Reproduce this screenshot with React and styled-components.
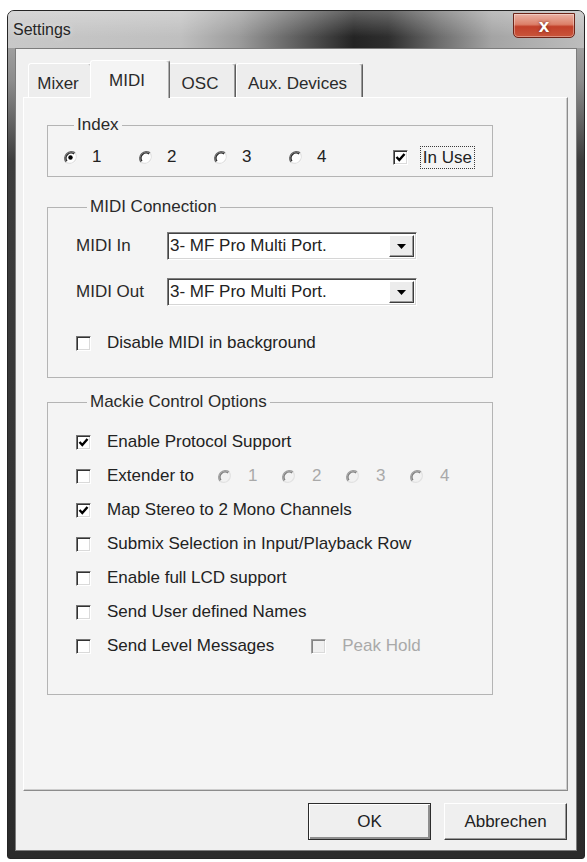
import React from 'react';
import styled, { createGlobalStyle } from 'styled-components';

const GlobalStyle = createGlobalStyle`
  html, body {
    margin: 0;
    padding: 0;
    background: #fff;
  }
  body {
    font-family: 'Liberation Sans', Arial, sans-serif;
    color: #222;
  }
`;

export default function App() {
  return (
    <>
      <GlobalStyle />
      <Page>
        <Window>
          <TitleBar>
            <Title>Settings</Title>
            <CloseButton>x</CloseButton>
          </TitleBar>
          <Client>
            <TabStrip>
              <Tab $w={64}>Mixer</Tab>
              <Tab $w={80} $active>MIDI</Tab>
              <Tab $w={68}>OSC</Tab>
              <Tab $w={127}>Aux. Devices</Tab>
            </TabStrip>
            <Pane>
              <Group $top={0} $pad='12px 17px 9px 15px'>
                <Legend>Index</Legend>
                <Row>
                  {[1, 2, 3, 4].map((n) => (
                    <RadioItem key={n} $w={75}>
                      <Radio checked={n === 1} />
                      <OptionText>{n}</OptionText>
                    </RadioItem>
                  ))}
                  <InUse>
                    <CheckBox checked />
                    <FocusText>In Use</FocusText>
                  </InUse>
                </Row>
              </Group>

              <Group $top={20} $pad='15px 20px 24px 28px'>
                <Legend>MIDI Connection</Legend>
                <FieldRow>
                  <FieldLabel>MIDI In</FieldLabel>
                  <Combo value='3- MF Pro Multi Port.' />
                </FieldRow>
                <FieldRow $mt={18}>
                  <FieldLabel>MIDI Out</FieldLabel>
                  <Combo value='3- MF Pro Multi Port.' />
                </FieldRow>
                <Row $mt={27}>
                  <CheckItem label='Disable MIDI in background' />
                </Row>
              </Group>

              <Group $top={14} $pad='13px 20px 31px 28px'>
                <Legend>Mackie Control Options</Legend>
                <OptionRow>
                  <CheckItem label='Enable Protocol Support' checked />
                </OptionRow>
                <OptionRow>
                  <CheckItem label='Extender to' />
                  <RadioSet>
                    {[1, 2, 3, 4].map((n) => (
                      <RadioItem key={n} $w={64}>
                        <Radio disabled />
                        <OptionText $disabled $gap={16}>{n}</OptionText>
                      </RadioItem>
                    ))}
                  </RadioSet>
                </OptionRow>
                <OptionRow>
                  <CheckItem label='Map Stereo to 2 Mono Channels' checked />
                </OptionRow>
                <OptionRow>
                  <CheckItem label='Submix Selection in Input/Playback Row' />
                </OptionRow>
                <OptionRow>
                  <CheckItem label='Enable full LCD support' />
                </OptionRow>
                <OptionRow>
                  <CheckItem label='Send User defined Names' />
                </OptionRow>
                <OptionRow>
                  <CheckItem label='Send Level Messages' />
                  <PeakHold>
                    <CheckItem label='Peak Hold' disabled />
                  </PeakHold>
                </OptionRow>
              </Group>
            </Pane>
            <ButtonRow>
              <DlgButton $default>OK</DlgButton>
              <DlgButton>Abbrechen</DlgButton>
            </ButtonRow>
          </Client>
        </Window>
      </Page>
    </>
  );
}

function CheckBox({ checked, disabled }) {
  return (
    <Box $disabled={disabled}>
      {checked && (
        <svg width='11' height='11' viewBox='0 0 11 11'>
          <polyline
            points='1.5,5 4.3,8 9.5,2'
            fill='none'
            stroke='#000'
            strokeWidth='2.4'
          />
        </svg>
      )}
    </Box>
  );
}

function CheckItem({ label, checked, disabled }) {
  return (
    <CheckWrap>
      <CheckBox checked={checked} disabled={disabled} />
      <CheckText $disabled={disabled}>{label}</CheckText>
    </CheckWrap>
  );
}

// classic sunken radio: dark upper-left rim, light lower-right rim
function Radio({ checked, disabled }) {
  const dark = disabled ? '#a0a0a0' : '#6a6a6a';
  const darker = disabled ? '#808080' : '#2e2e2e';
  return (
    <svg width='15' height='15' viewBox='0 0 15 15' style={{ flex: 'none' }}>
      <circle cx='7.5' cy='7.5' r='6.5' fill={disabled ? '#f2f2f2' : '#fff'} />
      <path d='M12.1 2.9 A6.6 6.6 0 0 0 2.9 12.1' fill='none' stroke={dark} strokeWidth='1.4' />
      <path d='M11.1 3.9 A5.2 5.2 0 0 0 3.9 11.1' fill='none' stroke={darker} strokeWidth='1.4' />
      <path d='M2.9 12.1 A6.6 6.6 0 0 0 12.1 2.9' fill='none' stroke='#e2e2e2' strokeWidth='1.3' />
      {checked && <circle cx='7.5' cy='7.5' r='2.2' fill='#000' />}
    </svg>
  );
}

function Combo({ value }) {
  return (
    <ComboBox>
      <ComboText>{value}</ComboText>
      <ComboButton>
        <svg width='9' height='5' viewBox='0 0 9 5'>
          <polygon points='0,0 9,0 4.5,5' fill='#000' />
        </svg>
      </ComboButton>
    </ComboBox>
  );
}

const Page = styled.div`
  width: 587px;
  height: 862px;
  box-sizing: border-box;
  padding: 10px 2px 0 7px;
`;

const Window = styled.div`
  width: 578px;
  height: 849px;
  box-sizing: border-box;
  display: flex;
  flex-direction: column;
  border: 1px solid #252525;
  border-radius: 7px 7px 3px 3px;
  overflow: hidden;
  background: linear-gradient(180deg, #b4b4b4 0, #8c8c8c 70px, #3c3c3c 150px, #2b2b2b 100%);
`;

const TitleBar = styled.div`
  height: 37px;
  flex: none;
  display: flex;
  align-items: center;
  justify-content: space-between;
  padding-left: 5px;
  background:
    linear-gradient(180deg, rgba(255, 255, 255, 0.28), rgba(255, 255, 255, 0) 70%),
    linear-gradient(
      90deg,
      #c8c8c8 0%,
      #bfbfbf 30%,
      #9c9c9c 40%,
      #5a5a5a 51%,
      #242424 60%,
      #2e2e2e 66%,
      #6e6e6e 75%,
      #a4a4a4 84%,
      #bdbdbd 100%
    );
`;

const Title = styled.span`
  font-size: 16px;
  color: #262626;
  text-shadow: 0 0 6px rgba(255, 255, 255, 0.6);
`;

const CloseButton = styled.span`
  align-self: flex-start;
  width: 62px;
  height: 25px;
  margin: 2px 9px 0 0;
  box-sizing: border-box;
  display: flex;
  align-items: center;
  justify-content: center;
  border: 1px solid #6e2418;
  border-radius: 0 0 5px 5px;
  background: linear-gradient(180deg, #eab1a4 0%, #dc8069 45%, #c2402a 55%, #c9553b 100%);
  box-shadow: inset 0 0 0 1px rgba(255, 255, 255, 0.35);
  color: #fff;
  font-size: 19px;
  font-weight: bold;
  line-height: 1;
  text-shadow: 0 0 3px #6e2418;
`;

const Client = styled.div`
  flex: 1;
  margin: 0 7px 7px;
  box-sizing: border-box;
  display: flex;
  flex-direction: column;
  border: 1px solid #7c7c7c;
  background: #f0f0f0;
`;

const TabStrip = styled.div`
  height: 37px;
  margin-top: 11px;
  padding-left: 12px;
  display: flex;
  align-items: flex-end;
`;

const Tab = styled.div`
  position: relative;
  z-index: ${(p) => (p.$active ? 1 : 0)};
  width: ${(p) => p.$w}px;
  height: ${(p) => (p.$active ? 38 : 34)}px;
  margin: ${(p) => (p.$active ? '0 -2px -1px' : '0')};
  box-sizing: border-box;
  display: flex;
  align-items: center;
  justify-content: center;
  padding: ${(p) => (p.$active ? '2px 6px 0 0' : '6px 4px 0 0')};
  border: 1px solid;
  border-bottom: none;
  border-color: #fff ${(p) => (p.$active ? '#6a6a6a' : '#5e5e5e')} transparent #fff;
  border-radius: 3px 3px 0 0;
  box-shadow: inset -1px 0 ${(p) => (p.$active ? '#b0b0b0' : '#9a9a9a')};
  background: ${(p) => (p.$active ? '#f4f4f4' : '#ededed')};
  font-size: 17px;
  color: #2a2a2a;
`;

const Pane = styled.div`
  height: 694px;
  margin: 0 8px 0 7px;
  box-sizing: border-box;
  display: flex;
  flex-direction: column;
  padding: 17px 0 0 23px;
  border: 1px solid;
  border-color: #fff #8c8c8c #8c8c8c #fff;
  box-shadow: inset -1px -1px #cdcdcd;
  background: #f4f4f4;
`;

const Group = styled.fieldset`
  width: 446px;
  min-width: 0;
  box-sizing: border-box;
  margin: ${(p) => p.$top}px 0 0;
  padding: ${(p) => p.$pad};
  border: 1px solid #b4b4b4;
`;

const Legend = styled.legend`
  margin-left: 11px;
  padding: 0 3px;
  font-size: 17px;
  line-height: 20px;
  color: #2a2a2a;
`;

const Row = styled.div`
  height: 20px;
  margin-top: ${(p) => p.$mt || 0}px;
  display: flex;
  align-items: center;
`;

const OptionRow = styled.div`
  height: 34px;
  display: flex;
  align-items: center;
`;

const RadioItem = styled.div`
  flex: 0 0 ${(p) => p.$w}px;
  display: flex;
  align-items: center;
`;

const RadioSet = styled.div`
  margin-left: 23px;
  display: flex;
  align-items: center;
`;

const OptionText = styled.span`
  margin-left: ${(p) => p.$gap || 14}px;
  font-size: 17px;
  color: ${(p) => (p.$disabled ? '#a9a9a9' : '#222')};
`;

const InUse = styled.div`
  margin-left: auto;
  display: flex;
  align-items: center;
`;

const FocusText = styled.span`
  margin-left: 12px;
  padding: 1px 2px;
  border: 1px dotted #3a3a3a;
  font-size: 17px;
  line-height: 19px;
`;

const Box = styled.span`
  flex: none;
  width: 15px;
  height: 15px;
  box-sizing: border-box;
  display: flex;
  align-items: center;
  justify-content: center;
  border: 1px solid;
  border-color: ${(p) => (p.$disabled ? '#a0a0a0 #fff #fff #a0a0a0' : '#767676 #fff #fff #767676')};
  box-shadow: inset 1px 1px ${(p) => (p.$disabled ? '#858585' : '#333')},
    inset -1px -1px #dadada;
  background: ${(p) => (p.$disabled ? '#f0f0f0' : '#fff')};
`;

const CheckWrap = styled.label`
  display: flex;
  align-items: center;
`;

const CheckText = styled.span`
  margin-left: 16px;
  font-size: 17px;
  color: ${(p) => (p.$disabled ? '#a9a9a9' : '#222')};
  white-space: nowrap;
`;

const PeakHold = styled.div`
  margin-left: 37px;
`;

const FieldRow = styled.div`
  height: 28px;
  margin-top: ${(p) => p.$mt || 0}px;
  display: flex;
  align-items: center;
`;

const FieldLabel = styled.span`
  width: 91px;
  font-size: 17px;
  color: #2a2a2a;
`;

const ComboBox = styled.div`
  width: 250px;
  height: 28px;
  box-sizing: border-box;
  display: flex;
  padding: 2px;
  border: 1px solid;
  border-color: #7e7e7e #fff #fff #7e7e7e;
  box-shadow: inset 1px 1px #444, inset -1px -1px #d6d6d6;
  background: #fff;
`;

const ComboText = styled.span`
  flex: 1;
  font-size: 17px;
  line-height: 22px;
  color: #222;
  white-space: nowrap;
  overflow: hidden;
`;

const ComboButton = styled.span`
  width: 25px;
  box-sizing: border-box;
  display: flex;
  align-items: center;
  justify-content: center;
  border: 1px solid;
  border-color: #fff #3c3c3c #3c3c3c #fff;
  box-shadow: inset -1px -1px #9a9a9a;
  background: #ececec;
`;

const ButtonRow = styled.div`
  margin-top: 12px;
  padding-right: 9px;
  display: flex;
  justify-content: flex-end;
  gap: 13px;
`;

const DlgButton = styled.button`
  width: 123px;
  height: 37px;
  padding: 0;
  font-family: inherit;
  font-size: 17px;
  color: #222;
  background: #efefef;
  border: 1px solid;
  border-color: ${(p) => (p.$default ? '#2c2c2c' : '#fff #3c3c3c #3c3c3c #fff')};
  box-shadow: ${(p) =>
    p.$default
      ? 'inset 1px 1px #fff, inset -2px -2px #8e8e8e'
      : 'inset -1px -1px #9a9a9a'};
`;
